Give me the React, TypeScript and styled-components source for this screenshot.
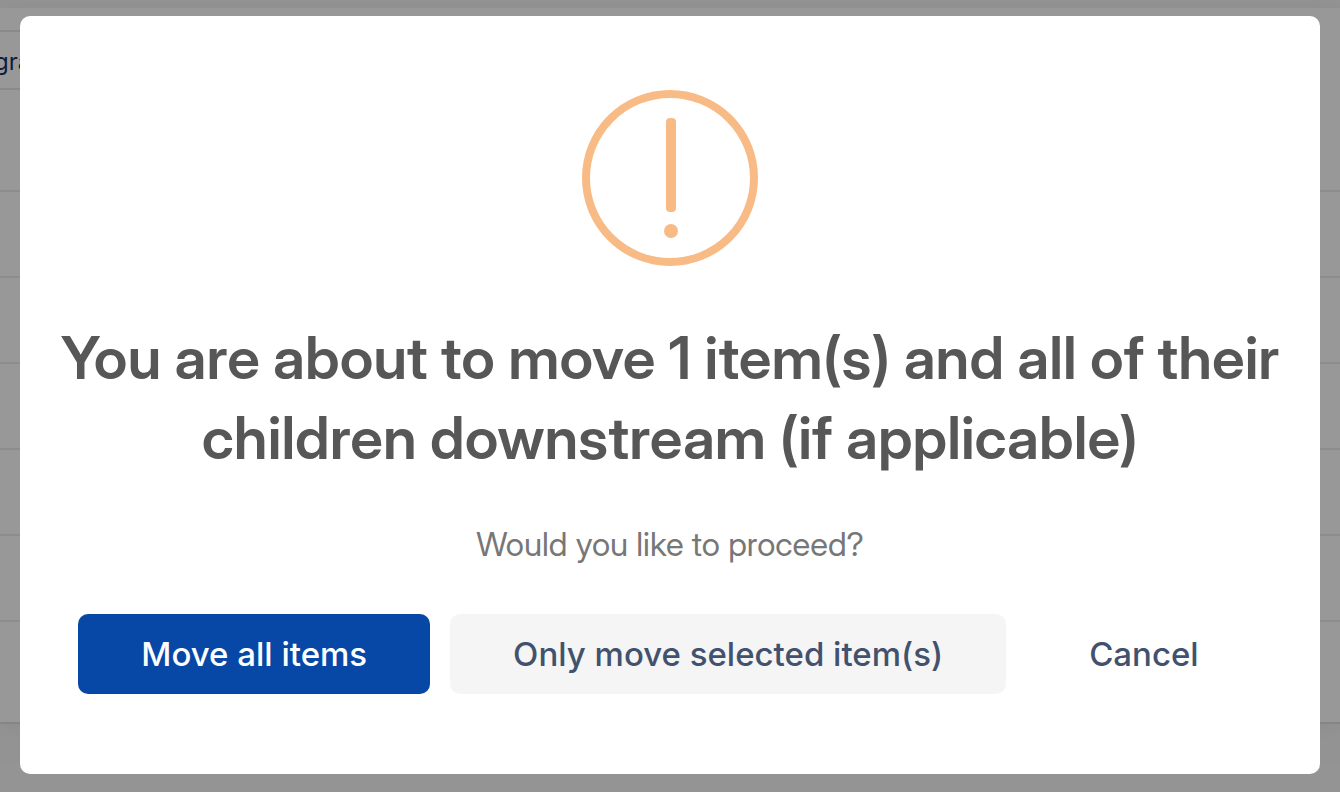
import React from "react";
import styled, { createGlobalStyle } from "styled-components";

const Global = createGlobalStyle`
  * { box-sizing: border-box; }
  html, body, #root { height: 100%; }
  body {
    margin: 0;
    background: #949494;
    font-family: Inter, "Liberation Sans", sans-serif;
    overflow: hidden;
  }
`;

const Page = styled.div`
  position: relative;
  min-height: 100%;
`;

const Board = styled.div`
  padding-top: 8px;
`;

const Sheet = styled.div`
  padding-top: 22px;
  background: #989898;
  border-bottom: 2px solid #858585;
  box-shadow: 0 2px 24px #85858588;
`;

const Header = styled.div`
  display: flex;
  align-items: center;
  width: 50%;
  height: 60px;
  padding-top: 2px;
  border-top: 2px solid #8a8a8a;
  border-bottom: 2px solid #8a8a8a;
  color: #0e1c3f;
  font-size: 24px;
`;

const Row = styled.div<{ $height: number }>`
  height: ${(p) => p.$height}px;
  border-bottom: 2px solid #8d8d8d;
  &:last-child { border-bottom: 0; }
`;

const Cell = styled.span`
  margin-left: -6px;
`;

const Overlay = styled.div`
  position: absolute;
  inset: 0;
  display: flex;
  padding: 16px 20px 18px;
`;

const Dialog = styled.section`
  flex: 1;
  display: flex;
  flex-direction: column;
  align-items: center;
  padding: 74px 36px 0;
  border-radius: 10px;
  background: #fff;
`;

const Icon = styled.svg`
  width: 176px;
  height: 176px;
  flex: none;
`;

const Title = styled.h2`
  margin: 52px 0 0;
  color: #575757;
  font-family: "Inter Display", Inter, "Liberation Sans", sans-serif;
  font-size: 59px;
  line-height: 80px;
  font-weight: 600;
  text-align: center;
`;

const Message = styled.p`
  margin: 46px 0 0;
  color: #777;
  font-family: "Inter Display", Inter, "Liberation Sans", sans-serif;
  font-size: 33px;
  line-height: 40px;
`;

const Actions = styled.div`
  display: flex;
  gap: 20px;
  margin-top: 50px;
`;

const Button = styled.button<{ $bg: string; $fg: string }>`
  height: 80px;
  padding: 0 63px;
  border: 0;
  border-radius: 10px;
  background: ${(p) => p.$bg};
  color: ${(p) => p.$fg};
  font: 500 33px Inter, "Liberation Sans", sans-serif;
  white-space: nowrap;
`;

export default function App() {
  return (
    <Page>
      <Global />
      <Board>
        <Sheet>
          <Header><Cell>gra</Cell></Header>
          <Row $height={102} />
          {[0, 1, 2, 3, 4].map((i) => <Row key={i} $height={86} />)}
          <Row $height={100} />
        </Sheet>
      </Board>
      <Overlay>
        <Dialog role="dialog" aria-labelledby="title">
          <Icon viewBox="0 0 176 176" aria-hidden="true">
            <circle cx="88" cy="88" r="84" fill="none" stroke="#f8bb86" strokeWidth="8" />
            <rect x="84" y="28" width="10" height="94" rx="4" fill="#f8bb86" />
            <circle cx="89" cy="141" r="7" fill="#f8bb86" />
          </Icon>
          <Title id="title">You are about to move 1 item(s) and all of their children downstream (if applicable)</Title>
          <Message>Would you like to proceed?</Message>
          <Actions>
            <Button $bg="#0747a6" $fg="#fff">Move all items</Button>
            <Button $bg="#f5f5f5" $fg="#42526e">Only move selected item(s)</Button>
            <Button $bg="transparent" $fg="#42526e">Cancel</Button>
          </Actions>
        </Dialog>
      </Overlay>
    </Page>
  );
}
